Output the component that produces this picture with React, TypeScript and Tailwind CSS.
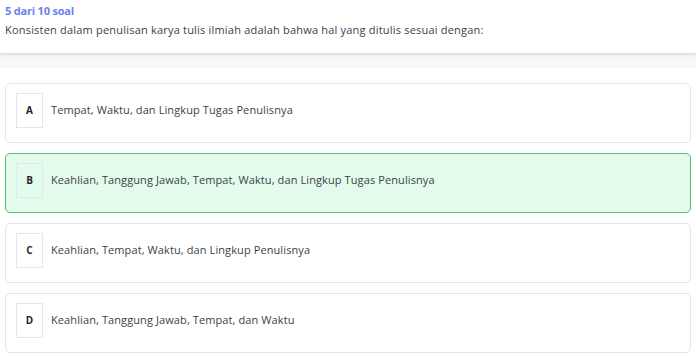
import * as React from "react";

const options = [
  { key: "A", text: "Tempat, Waktu, dan Lingkup Tugas Penulisnya" },
  { key: "B", text: "Keahlian, Tanggung Jawab, Tempat, Waktu, dan Lingkup Tugas Penulisnya", selected: true },
  { key: "C", text: "Keahlian, Tempat, Waktu, dan Lingkup Penulisnya" },
  { key: "D", text: "Keahlian, Tanggung Jawab, Tempat, dan Waktu" },
];

export default function App() {
  return (
    <div
      className="w-[696px] h-[358px] bg-white overflow-hidden"
      style={{ fontFamily: '"Open Sans", "Noto Sans", sans-serif' }}
    >
      <div className="h-[53px] bg-white px-[5px] pt-[3px] shadow-[0_2px_3px_rgba(0,0,0,0.12)] relative z-10">
        <p className="text-[11px] leading-[16px] font-bold text-[#6a7ff2] tracking-[-0.2px]">5 dari 10 soal</p>
        <p className="mt-[3px] text-[11px] leading-[16px] text-[#3b3f4a] tracking-[0.2px]">
          Konsisten dalam penulisan karya tulis ilmiah adalah bahwa hal yang ditulis sesuai dengan:
        </p>
      </div>
      <div className="h-[15px] bg-[#f7f8fa]" />
      <div className="flex flex-col gap-[10px] px-[5px] pt-[15px]">
        {options.map((o) => (
          <div
            key={o.key}
            className={
              o.selected
                ? "h-[60px] rounded-[5px] border border-[#52c07a] bg-[#e3fbea] px-[10px] pt-[9px]"
                : "h-[60px] rounded-[5px] border border-[#e3e6ec] bg-white px-[10px] pt-[9px]"
            }
          >
            <div className="flex items-center gap-[8px]">
              <div className="w-[27px] h-[35px] border border-[#e3e6ec] flex items-center justify-center text-[10px] font-bold text-[#1f2430]">
                {o.key}
              </div>
              <span className="text-[11px] text-[#3b3f4a] tracking-[0.1px]">{o.text}</span>
            </div>
          </div>
        ))}
      </div>
    </div>
  );
}
